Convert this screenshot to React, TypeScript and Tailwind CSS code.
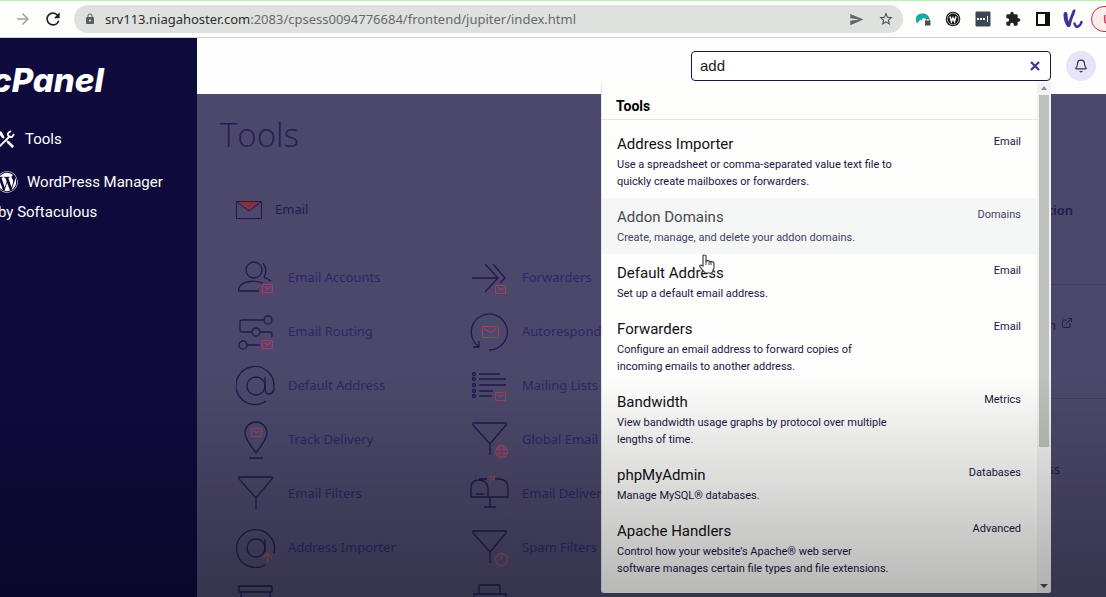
import React, { useState } from "react";
import { FaWordpress } from "react-icons/fa";
import { MdArrowForward, MdExtension, MdLock, MdRefresh, MdSend, MdStarBorder } from "react-icons/md";
import { Bell, ExternalLink } from "lucide-react";

const results = [
  { title: "Address Importer", group: "Email", text: "Use a spreadsheet or comma-separated value text file to quickly create mailboxes or forwarders." },
  { title: "Addon Domains", group: "Domains", text: "Create, manage, and delete your addon domains.", active: true },
  { title: "Default Address", group: "Email", text: "Set up a default email address." },
  { title: "Forwarders", group: "Email", text: "Configure an email address to forward copies of incoming emails to another address." },
  { title: "Bandwidth", group: "Metrics", text: "View bandwidth usage graphs by protocol over multiple lengths of time." },
  { title: "phpMyAdmin", group: "Databases", text: "Manage MySQL® databases." },
  { title: "Apache Handlers", group: "Advanced", text: "Control how your website’s Apache® web server software manages certain file types and file extensions." },
];

const Envelope = ({ x, y, w = 10, h = 8 }: { x: number; y: number; w?: number; h?: number }) => (
  <g stroke="#944562" strokeWidth="1.2">
    <rect x={x + 0.5} y={y + 0.5} width={w} height={h} rx="1" />
    <path d={`M${x + 2.5} ${y + 2.5}L${x + 0.5 + w / 2} ${y + h / 2 + 1}L${x + w - 1.5} ${y + 2.5}`} />
  </g>
);

const Funnel = () => <path d="M4 3h31q2 0 1 2L20 24L3 5q-1-2 1-2zM20 24v11" />;

const At = () => (
  <>
    <circle cx="20" cy="20" r="9" />
    <path d="M29 11v12q0 5 4 5t5-5v-3a19 19 0 1 0-8 15" />
  </>
);

const AtUp = () => (
  <>
    <circle cx="20" cy="20" r="9" />
    <path d="M29 11v13M38 25a19 19 0 1 0-9 12" />
    <path stroke="#944562" strokeWidth="1.2" d="M31.500 35v-9M27 30l4.500-4.500L36 30" />
  </>
);

const tools: { name: string; icon: React.ReactNode }[] = [
  {
    name: "Email Accounts",
    icon: (
      <>
        <circle cx="18" cy="12" r="8" />
        <path d="M27 5c4 5 4 9 1 14l7 4M27 25c-8-3-19-2-23 3q-3 5 0 5h19" />
        <Envelope x={26} y={26} />
      </>
    ),
  },
  {
    name: "Forwarders",
    icon: (
      <>
        <path d="M2 20h25M15 6l13 14-13 14M23 6l12 14-5 5" />
        <Envelope x={25} y={27} />
      </>
    ),
  },
  {
    name: "Email Routing",
    icon: (
      <>
        <circle cx="32" cy="8" r="4" />
        <circle cx="20" cy="20" r="4" />
        <circle cx="7" cy="33" r="4" />
        <path d="M28 8H6q-2 0-2 2v8q0 2 2 2h10M24 20h10q2 0 2 2v3M11 33h13" />
        <Envelope x={26} y={28} />
      </>
    ),
  },
  {
    name: "Autoresponders",
    icon: (
      <>
        <path d="M19 38a18 18 0 1 0-11-4M3 35h6v-6" />
        <Envelope x={12} y={14} w={16} h={11} />
      </>
    ),
  },
  { name: "Default Address", icon: <At /> },
  {
    name: "Mailing Lists",
    icon: (
      <>
        {[8, 13, 19, 25, 30].map((y) => (
          <circle key={y} cx="4" cy={y} r="1.5" />
        ))}
        <path d="M9 8h21M9 13h27M9 19h27M9 25h14M9 30h13" />
        <Envelope x={25} y={26} />
      </>
    ),
  },
  {
    name: "Track Delivery",
    icon: (
      <>
        <path d="M20 33C15 26 9 19 9 13a11 11 0 0 1 22 0c0 6-6 13-11 20zM13 38h14" />
        <Envelope x={15} y={8} />
      </>
    ),
  },
  {
    name: "Global Email Filters",
    icon: (
      <>
        <Funnel />
        <g stroke="#944562">
          <circle cx="31.500" cy="31.500" r="6" />
          <ellipse cx="31.500" cy="31.500" rx="2.500" ry="6" />
          <path d="M26 29.500h11M26 33.500h11" />
        </g>
      </>
    ),
  },
  { name: "Email Filters", icon: <Funnel /> },
  {
    name: "Email Deliverability",
    icon: (
      <>
        <path d="M18 23H1v-9q0-8 8-8t9 8zM9 5h8M18 23h20v-9q0-8-8-9h-5M20 23v10M14 33h12M6 20h8" />
        <path stroke="#84405f" d="M20.500 9V2.500h4v3h-4" />
      </>
    ),
  },
  { name: "Address Importer", icon: <AtUp /> },
  {
    name: "Spam Filters",
    icon: (
      <>
        <Funnel />
        <g stroke="#944562">
          <circle cx="31.500" cy="31.500" r="6" />
          <path d="M31.500 27v5" />
        </g>
      </>
    ),
  },
];

const lastRow = [
  { name: "Encryption", d: "M3 4h33v6H3zM5 10v24h29V10" },
  { name: "Calendars and Contacts", d: "M9 12V4q0-1 1-1h19q1 0 1 1v8M4 12h32v20H4z" },
];

const ToolIcon = ({ children }: { children: React.ReactNode }) => (
  <svg className="w-10 h-10 shrink-0" viewBox="0 0 40 40" fill="none" stroke="#1f194d" strokeWidth="1.3">
    {children}
  </svg>
);

const BrowserBar = () => (
  <div className="h-[38px] shrink-0 flex items-center border-t border-t-[#b9f2b0] border-b border-b-[#cfcfcf] bg-[#fdfefc]">
    <button aria-label="Forward" className="w-[30px] ml-2 flex justify-center">
      <MdArrowForward className="w-[18px] h-[18px] text-[#a0a1a0]" />
    </button>
    <button aria-label="Reload" className="w-[30px] flex justify-center">
      <MdRefresh className="w-5 h-5 text-[#202124]" />
    </button>
    <div className="flex-1 min-w-0 h-7 ml-[6px] pl-[10px] pr-[2px] rounded-full bg-[#dfe1df] flex items-center">
      <MdLock className="w-3 h-3 shrink-0 text-[#5b5d5e]" />
      <div className="flex-1 min-w-0 ml-[9px] truncate font-['Noto_Sans',sans-serif] text-[13px] leading-5 text-[#66696b]">
        <span className="text-[#2c2e30]">srv113.niagahoster.com</span>:2083/cpsess0094776684/frontend/jupiter/index.html
      </div>
      <button aria-label="Share" className="w-[30px] flex justify-center">
        <MdSend className="w-[15px] h-[15px] text-[#626463]" />
      </button>
      <button aria-label="Bookmark" className="w-[30px] flex justify-center">
        <MdStarBorder className="w-4 h-4 text-[#4d4f50]" />
      </button>
    </div>
    <div className="flex items-center ml-[5px]">
      <button aria-label="VPN" className="w-[30px] flex justify-center">
        <svg className="w-4 h-4" viewBox="0 0 16 16">
          <path d="M2 12.500C-1 7 2 2.500 7.500 2.500c4 0 6 2 7 5h-3.500L9.500 8 8.500 6.500 6.500 9.500l-1-1z" fill="#13ada0" />
          <path d="M10 9.500h5.500v5H10z" fill="#4b4f50" />
          <path d="M11.300 9.500V8.700a1.500 1.500 0 0 1 3 0v.8" fill="none" stroke="#4b4f50" />
        </svg>
      </button>
      <button aria-label="Wappalyzer" className="w-[30px] flex justify-center">
        <svg className="w-4 h-4" viewBox="0 0 16 16" fill="none">
          <circle cx="8" cy="8" r="7.300" fill="#1c1c1c" />
          <circle cx="8" cy="8" r="5.800" stroke="#ddd" strokeWidth=".7" />
          <path d="M5 5.500l1.500 5L8 7l1.500 3.500 1.500-5" stroke="#fff" strokeWidth="1.500" />
        </svg>
      </button>
      <button aria-label="Passwords" className="w-[30px] flex justify-center">
        <svg className="w-4 h-4" viewBox="0 0 16 16" fill="#fff">
          <rect x="0.500" y="0.500" width="15" height="15" rx="1" fill="#3b4754" />
          <path d="M2 7h2v2H2zM5 7h2v2H5zM8 7h2v2H8zM12 5h1v6h-1z" />
        </svg>
      </button>
      <button aria-label="Extensions" className="w-[30px] flex justify-center">
        <MdExtension className="w-4 h-4 text-[#202124]" />
      </button>
      <button aria-label="Side panel" className="w-[30px] flex justify-center">
        <svg className="w-[14px] h-[14px]" viewBox="0 0 14 14">
          <path d="M1 1h12v12H1z" fill="none" stroke="#111" strokeWidth="2" />
          <path d="M9 1h4v12H9z" fill="#111" />
        </svg>
      </button>
      <button aria-label="Profile" className="w-[30px] flex justify-center">
        <svg className="w-5 h-5" viewBox="0 0 20 20" fill="none" stroke="#45318f" strokeLinecap="round" strokeLinejoin="round">
          <path d="M2.500 5q0 7 3 11" strokeWidth="4" />
          <path d="M6 16.500Q8 9 11 2" strokeWidth="3" />
          <path d="M11.500 14.500q1 4 3.500 3 2.500-1 3.500-4.500" strokeWidth="2.500" />
        </svg>
      </button>
    </div>
    <button className="w-11 h-[26px] ml-[3px] -mr-[29px] pl-[11px] rounded-full border border-[#c2334b] bg-[#fdecec] text-left font-['Noto_Sans',sans-serif] text-[13px] leading-5 text-[#b3142d]">
      Update
    </button>
  </div>
);

const Sidebar = () => (
  <nav className="w-[197px] shrink-0 bg-[#0f0a3c] text-white font-[Roboto,sans-serif] text-[15px]">
    <div className="-ml-2 mt-6 h-9 font-[Inter,sans-serif] font-extrabold italic text-[33px] leading-9">cPanel</div>
    <a href="#tools" className="-ml-1 mt-7 flex items-center gap-[10px] h-[26px]">
      <svg className="w-[19px] h-[19px] shrink-0" viewBox="0 0 19 19" fill="none" stroke="#fff" strokeWidth="1.800">
        <path d="M3 17L13 7M12 3q-1 4 4 4l2-3M12 3l3-2M2 2l6 6M11 11l6 6" />
        <path d="M2 2l3 1 2 4M12 12l5 5" strokeWidth="2.500" />
      </svg>
      Tools
    </a>
    <a href="#wordpress" className="-ml-1 mt-[15px] block leading-[30px]">
      <span className="flex items-center gap-[9px]">
        <FaWordpress className="w-[22px] h-[22px] shrink-0" />
        WordPress Manager
      </span>
      <span className="block pl-[2px]">by Softaculous</span>
    </a>
  </nav>
);

const ResultsMenu = () => (
  <div className="absolute right-0 top-full mt-px z-10 w-[450px] h-[511px] flex rounded-b-[3px] overflow-hidden bg-[#fefefd] border-l border-[#e4e4ea] font-[Roboto,sans-serif]">
    <div className="flex-1 min-w-0">
      <h2 className="pt-4 pb-[5px] pl-[14px] border-b border-[#e6e6e6] text-sm leading-4 font-bold text-black">Tools</h2>
      <ul className="pt-[5px]">
        {results.map((r) => (
          <li key={r.title} className={r.active ? "bg-[#f5f6f6] text-[#4a474f]" : "text-[#111014]"}>
            <a href="#result" className="flex justify-between pl-[15px] pr-4 py-2">
              <span className="block w-[279px]">
                <span className="block text-[15px] leading-[23px]">{r.title}</span>
                <span className={r.active ? "block text-[11px] leading-[17px] text-[#444067]" : "block text-[11px] leading-[17px] text-[#1a1543]"}>
                  {r.text}
                </span>
              </span>
              <span className={r.active ? "text-[11px] leading-[17px] text-[#444067]" : "text-[11px] leading-[17px] text-[#1a1543]"}>
                {r.group}
              </span>
            </a>
          </li>
        ))}
      </ul>
    </div>
    <div className="w-[14px] px-[2px] flex flex-col items-center bg-[#f2f2f3]">
      <svg className="w-2 h-[13px]" viewBox="0 0 8 13">
        <path d="M4 4l3 4H1z" fill="#8c8c8c" />
      </svg>
      <div className="w-full h-[352px] bg-[#bfc1bc]" />
      <svg className="w-2 h-[13px] mt-auto" viewBox="0 0 8 13">
        <path d="M0 4h8L4 8z" fill="#4a4a4a" />
      </svg>
    </div>
  </div>
);

const Header = () => {
  const [query, setQuery] = useState("add");

  return (
    <header className="h-14 shrink-0 flex items-center justify-end gap-[15px] pr-[10px] bg-[#fefefe]">
      <div className="relative">
        <div className="w-[360px] h-[30px] flex items-center rounded border border-[#1d1838] bg-white">
          <input
            type="text"
            aria-label="Search tools"
            value={query}
            onChange={(e) => setQuery(e.target.value)}
            className="flex-1 min-w-0 pl-2 bg-transparent font-['Liberation_Sans',sans-serif] text-[15px] leading-5 text-[#1a1a1a] focus:outline-none"
          />
          <button aria-label="Clear search" onClick={() => setQuery("")} className="w-[30px] h-7 flex items-center justify-center">
            <svg className="w-[10px] h-[10px]" viewBox="0 0 10 10" stroke="#3e3a94" strokeWidth="2.300">
              <path d="M1 1l8 8M9 1L1 9" />
            </svg>
          </button>
        </div>
        {query && <ResultsMenu />}
      </div>
      <button aria-label="Notifications" className="w-[30px] h-[30px] rounded-full bg-[#e6e4f6] flex items-center justify-center">
        <Bell className="w-[14px] h-[14px] text-[#322e5c]" />
      </button>
    </header>
  );
};

const Content = () => (
  <main className="flex-1 min-h-0 overflow-hidden flex justify-between bg-[#4c486b] font-['Noto_Sans',sans-serif] text-[13px] text-[#2d2667]">
    <section className="pl-[23px] pt-5">
      <h1 className="h-[42px] font-['Open_Sans',sans-serif] font-light text-[33px] leading-[42px] text-[#241e55]">Tools</h1>
      <h2 className="mt-11 ml-[15px] h-5 flex items-center gap-3 text-[#211b52]">
        <svg className="w-[28px] h-5" viewBox="0 0 28 20">
          <path d="M2 1.500h24L14 11z" fill="#852f40" />
          <path d="M1.500 1.500h25v17h-25zM1.500 1.500L14 11 26.500 1.500" fill="none" stroke="#1f194d" />
        </svg>
        Email
      </h2>
      <div className="mt-[31px] ml-4 grid grid-cols-[234px_234px]">
        {tools.map((tool) => (
          <a key={tool.name} href="#tool" className="h-[54px] flex items-center gap-3 whitespace-nowrap">
            <ToolIcon>{tool.icon}</ToolIcon>
            {tool.name}
          </a>
        ))}
        {lastRow.map((tool) => (
          <a key={tool.name} href="#tool" aria-label={tool.name} className="h-[54px] flex items-center">
            <ToolIcon>
              <path d={tool.d} />
            </ToolIcon>
          </a>
        ))}
      </div>
    </section>
    <aside className="w-[200px] pt-[106px] text-right text-[#211b4c]">
      <h2 className="h-5 pr-[33px] font-semibold leading-5">General Information</h2>
      <div className="mt-16 h-[114px] pt-[30px] pr-[33px] flex justify-end items-start gap-[5px] border-t border-[#433e62] leading-5">
        Primary Domain
        <ExternalLink className="w-3 h-3 mt-[2px]" />
      </div>
      <div className="pt-[60px] pr-[46px] border-t border-[#433e62] leading-5">IP Address</div>
    </aside>
  </main>
);

export default function App() {
  return (
    <div className="relative h-screen overflow-hidden flex flex-col">
      <BrowserBar />
      <div className="flex-1 min-h-0 flex">
        <Sidebar />
        <div className="flex-1 min-w-0 flex flex-col">
          <Header />
          <Content />
        </div>
      </div>

      {/* shade along the bottom of the player */}
      <div className="absolute inset-x-0 bottom-0 h-[225px] z-20 pointer-events-none bg-linear-to-b from-black/0 to-black/28" />

      <svg className="absolute left-[698px] top-[254px] z-30 w-[18px] h-5 pointer-events-none" viewBox="0 0 18 20">
        <path
          d="M5 12V2q0-1 1-1t2 1v5q1-1 2 0 1-1 2 1 1-1 2 0 2-1 2 2v4l-2 5H7L2 13q-1-2 1-2z"
          fill="#fff"
          stroke="#444"
          strokeWidth="1.200"
        />
        <path d="M8 7v4M11 8v3M13 8v3" stroke="#444" />
      </svg>
    </div>
  );
}
